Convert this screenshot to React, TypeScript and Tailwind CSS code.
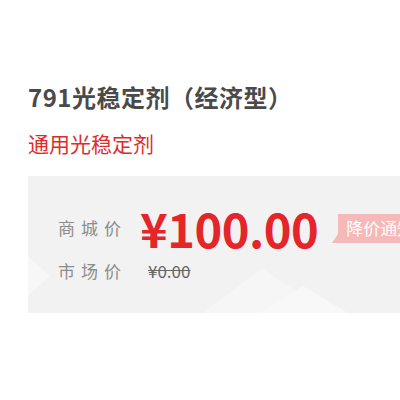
import React from 'react';

const App: React.FC = () => {
  return (
    <div className="w-[400px] h-[400px] overflow-hidden bg-white font-['Noto_Sans_CJK_SC','Noto_Sans',sans-serif]">
      <div className="pt-[80px] pl-[28px]">
        {/* 标题 */}
        <h1 className="text-[24px] leading-[34px] font-bold text-[#4a4a4a] whitespace-nowrap tracking-[0.5px]">
          791光稳定剂（经济型）
        </h1>
        <p className="mt-[14px] text-[21px] leading-[30px] text-[#e02b2b]">通用光稳定剂</p>

        {/* 价格面板 */}
        <div className="relative mt-[18px] h-[137px] w-[400px] bg-[#f2f2f2] overflow-hidden">
          <svg className="absolute inset-0" width="400" height="137" viewBox="0 0 400 137">
            <polygon points="0,80 22,100 0,120" fill="#f7f7f7" />
            <polygon points="175,137 234,92 300,137" fill="#f6f6f6" />
            <polygon points="230,137 275,110 320,137" fill="#f8f8f8" />
          </svg>
          <div className="relative pl-[30px] pt-[30px]">
            <div className="flex items-center h-[44px]">
              <span className="w-[82px] text-[17px] tracking-[6px] text-[#8c8c8c] whitespace-nowrap">商城价</span>
              <span className="text-[47px] leading-[44px] font-bold text-[#e4262b] whitespace-nowrap tracking-[-0.5px]">¥100.00</span>
              <div className="relative ml-[20px] h-[29px] pl-[8px] bg-[#f5b9b9] flex items-center">
                <span className="absolute left-[-6px] bottom-0 w-0 h-0 border-t-[9px] border-t-transparent border-r-[6px] border-r-[#f5b9b9]" />
                <span className="text-[17px] text-white whitespace-nowrap">降价通知</span>
              </div>
            </div>
            <div className="flex items-center mt-[8px] h-[26px]">
              <span className="w-[90px] text-[17px] tracking-[6px] text-[#8c8c8c] whitespace-nowrap">市场价</span>
              <span className="text-[17px] text-[#666666] line-through">¥0.00</span>
            </div>
          </div>
        </div>
      </div>
    </div>
  );
};

export default App;
